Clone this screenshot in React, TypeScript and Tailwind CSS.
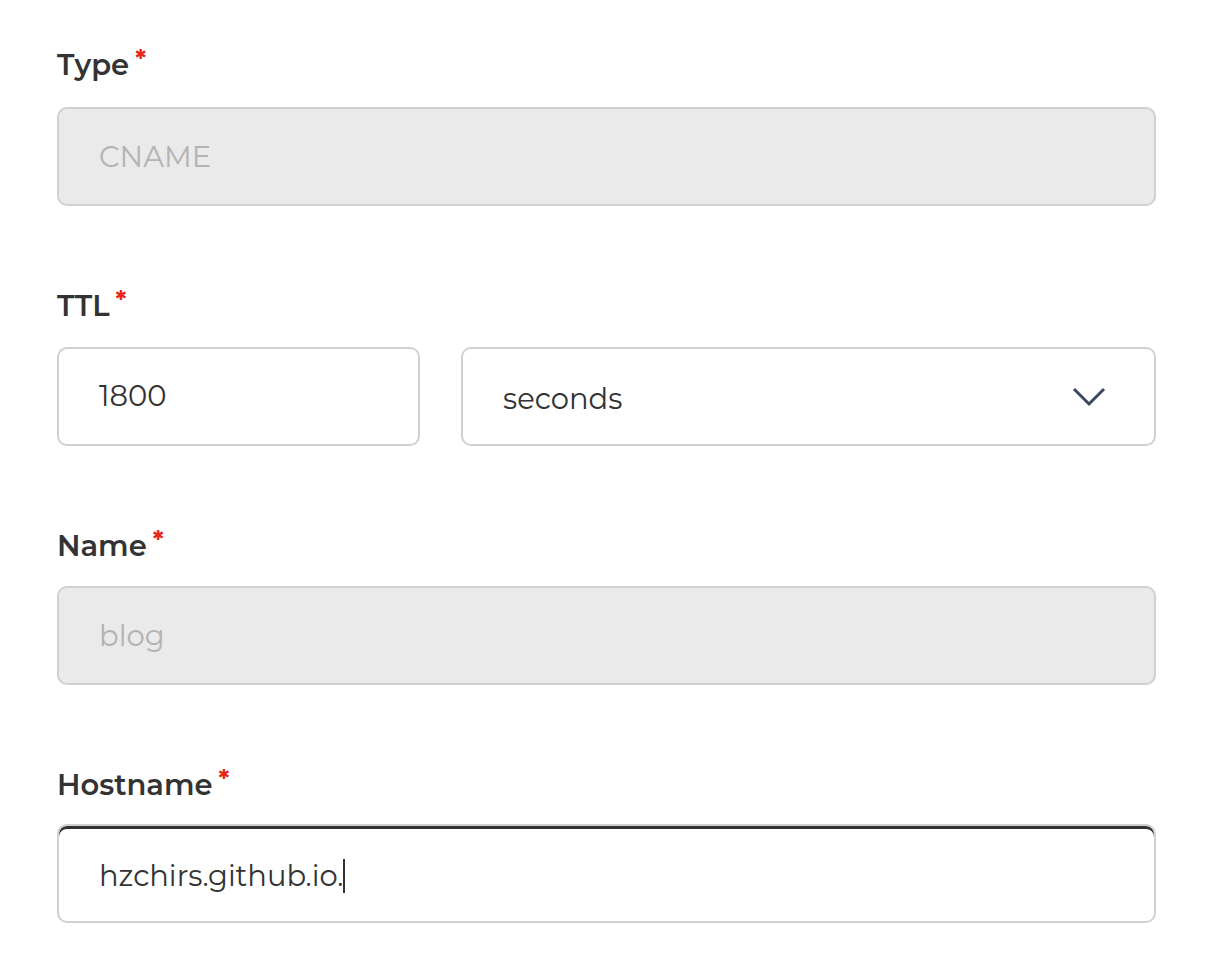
const font = "font-['Montserrat','Inter','DejaVu_Sans',sans-serif]";

function Label({ text }: { text: string }) {
  return (
    <div className="flex h-10 items-center pt-1 text-[29px] font-semibold text-[#333]">
      <span>{text}</span>
      <span className="ml-1.5 -mt-2.5 text-[25px] font-bold text-[#e8261c]">*</span>
    </div>
  );
}

function Box({
  children,
  disabled,
  focused,
  className = "",
}: {
  children: React.ReactNode;
  disabled?: boolean;
  focused?: boolean;
  className?: string;
}) {
  return (
    <div
      className={`flex h-[99px] items-center rounded-[10px] border-2 border-[#d0d0d0] px-10 text-[29px] ${
        disabled ? "bg-[#eaeaea] text-[#b3b3b3]" : "bg-white text-[#333]"
      } ${focused ? "shadow-[inset_0_3px_0_#333]" : ""} ${className}`}
    >
      {children}
    </div>
  );
}

export default function App() {
  return (
    <div className={`min-h-[968px] bg-white pl-[57px] pr-[74px] pt-[43px] ${font}`}>
      <div className="flex flex-col gap-[78px]">
        <div className="flex flex-col gap-[24px]">
          <Label text="Type" />
          <Box disabled>
            <span>CNAME</span>
          </Box>
        </div>

        <div className="flex flex-col gap-[23px]">
          <Label text="TTL" />
          <div className="flex gap-[41px]">
            <Box className="w-[363px]">
              <span className="-mt-0.5">1800</span>
            </Box>
            <Box className="flex-1 justify-between pr-12 text-[#2f3e4e]">
              <span className="mt-1">seconds</span>
              <svg width="34" height="22" viewBox="0 0 34 22" fill="none">
                <path d="M2 3 L17 18 L32 3" stroke="#3a4a5c" strokeWidth="3" />
              </svg>
            </Box>
          </div>
        </div>

        <div className="flex flex-col gap-[22px]">
          <Label text="Name" />
          <Box disabled>
            <span>blog</span>
          </Box>
        </div>

        <div className="flex flex-col gap-[21px]">
          <Label text="Hostname" />
          <Box focused>
            <span className="mt-1">hzchirs.github.io.</span>
            <span className="mt-1 h-[34px] w-[2px] bg-[#333]" />
          </Box>
        </div>
      </div>
    </div>
  );
}
